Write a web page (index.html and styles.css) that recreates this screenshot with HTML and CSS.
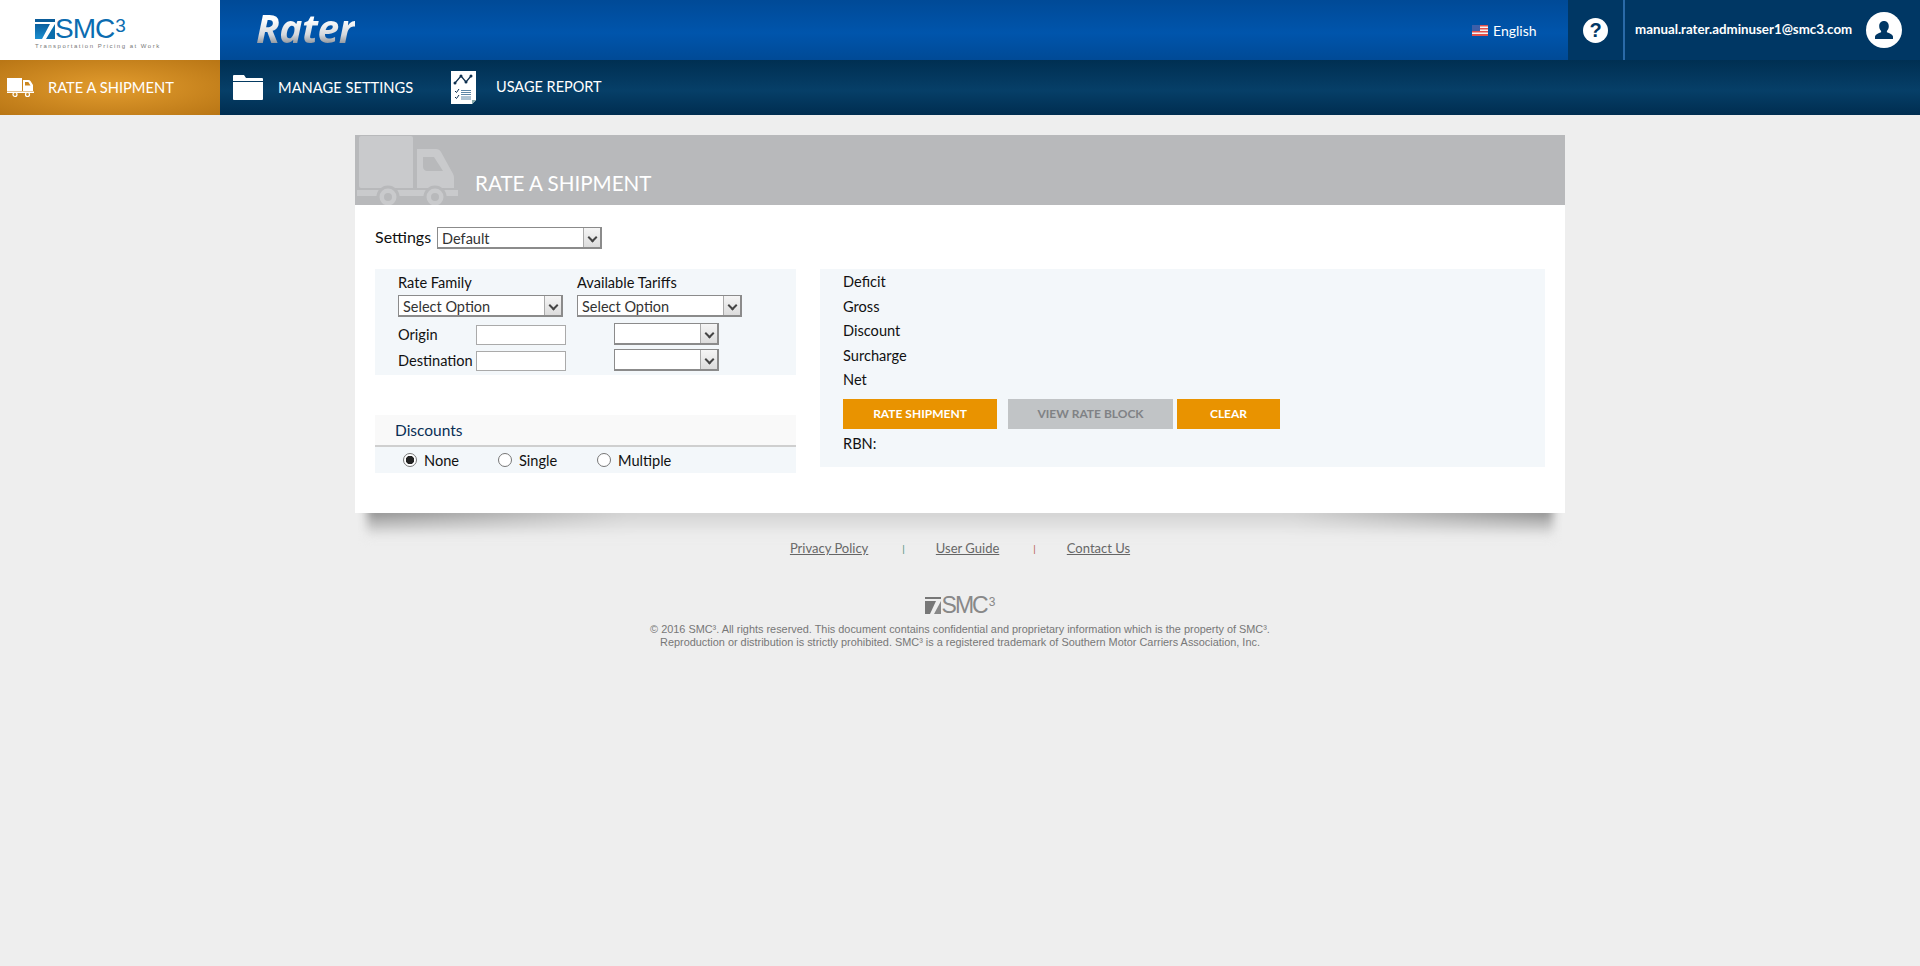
FILE: index.html
```html
<!DOCTYPE html>
<html lang="en">
<head>
    <meta charset="UTF-8">
    <title>SMC3 Rater</title>
    <link rel="stylesheet" href="styles.css">
</head>
<body>
    <header class="top-bar">
        <div class="brand">
            <div class="brand-mark">
                <svg class="brand-icon" width="20" height="20" viewBox="0 0 20 20">
                    <defs>
                        <linearGradient id="markBlue" x1="0" y1="0" x2="0" y2="1">
                            <stop offset="0" stop-color="#0a5f9e"/>
                            <stop offset="1" stop-color="#1b8fd0"/>
                        </linearGradient>
                    </defs>
                    <rect width="20" height="3" fill="#0a5c99"/>
                    <path d="M0 5h15L7 20H0z" fill="url(#markBlue)"/>
                    <path d="M20 5v15H11z" fill="#0a6cab"/>
                </svg>
                <span class="brand-name">SMC<sup>3</sup></span>
            </div>
            <div class="brand-tag">Transportation Pricing at Work</div>
        </div>
        <div class="app-name">Rater</div>
        <div class="lang">
            <svg width="16" height="11" viewBox="0 0 16 11">
                <rect width="16" height="11" fill="#f4f4f4"/>
                <path d="M0 0h16v1.500H0zM0 3h16v1.500H0zM0 6h16v1.500H0zM0 9h16v2H0z" fill="#e2504a"/>
                <rect width="8" height="6" fill="#3f5fa8"/>
            </svg>
            <span>English</span>
        </div>
        <div class="help">
            <span class="help-circle">?</span>
        </div>
        <div class="user">
            <span class="user-email">manual.rater.adminuser1@smc3.com</span>
            <span class="avatar">
                <svg width="20" height="20" viewBox="0 0 20 20">
                    <path d="M10 1c3 0 4.800 2.200 4.800 5.200 0 2-.8 3.600-1.900 4.700v1.300c2.800 1 5.600 2 6.100 4.300V19H1v-2.500c.5-2.300 3.300-3.300 6.100-4.300v-1.300C6 9.800 5.200 8.200 5.200 6.200 5.200 3.200 7 1 10 1z" fill="#003764"/>
                </svg>
            </span>
        </div>
    </header>

    <nav class="nav-bar">
        <a class="nav-item nav-active">
            <svg width="27" height="20" viewBox="0 0 27 20">
                <rect x="0" y="0" width="15" height="13" fill="#fff"/>
                <path d="M16 2h5.500c.8 0 1.500.4 2 1l2.500 4v6H16zM18 4v3.500h5.500L21.300 4z" fill="#fff" fill-rule="evenodd"/>
                <rect x="0" y="13.500" width="27" height="1.500" fill="#fff"/>
                <circle cx="8" cy="16.500" r="2" fill="#c98a24" stroke="#fff" stroke-width="1.200"/>
                <circle cx="20.500" cy="16.500" r="2" fill="#c98a24" stroke="#fff" stroke-width="1.200"/>
            </svg>
            <span>RATE A SHIPMENT</span>
        </a>
        <a class="nav-item nav-manage">
            <svg width="30" height="25" viewBox="0 0 30 25">
                <path d="M1 0h10l2 3h16a1 1 0 0 1 1 1v2H0V1a1 1 0 0 1 1-1z" fill="#fff"/>
                <path d="M0 7h30v17a1 1 0 0 1-1 1H1a1 1 0 0 1-1-1z" fill="#fff"/>
            </svg>
            <span>MANAGE SETTINGS</span>
        </a>
        <a class="nav-item nav-usage">
            <svg width="25" height="33" viewBox="0 0 25 33">
                <path d="M0 0h25v29l-4 4H0z" fill="#fff"/>
                <path d="M21 33v-4h4z" fill="#8aa"/>
                <path d="M4 12l6-7 5 6 5-6" fill="none" stroke="#0d2f4f" stroke-width="1.200"/>
                <circle cx="4" cy="12" r="1.500" fill="#0d2f4f"/>
                <circle cx="10" cy="5" r="1.500" fill="#0d2f4f"/>
                <circle cx="15" cy="11" r="1.500" fill="#0d2f4f"/>
                <circle cx="20" cy="5" r="1.500" fill="#0d2f4f"/>
                <path d="M4 20l1.500 1.500L8 18M4 26l1.500 1.500L8 24" fill="none" stroke="#0d2f4f"/>
                <path d="M10 19.500h10M10 21.500h10M10 23.500h10M10 26h10M10 28h10" stroke="#5d86a6"/>
            </svg>
            <span>USAGE REPORT</span>
        </a>
    </nav>

    <main class="card">
        <div class="card-head">
            <svg class="card-truck" width="103" height="70" viewBox="0 0 103 70">
                <path d="M6 1h50a2 2 0 0 1 2 2v50H6a2 2 0 0 1-2-2V3a2 2 0 0 1 2-2z" fill="#c9cacc"/>
                <path d="M62 14h19c2 0 4 1 5 3l11 20c1 2 2 3 2 6v10H62z" fill="#c9cacc"/>
                <path d="M68 22h11l9 14H72c-2 0-4-2-4-4z" fill="#b8b9bb"/>
                <rect x="2" y="55" width="101" height="6" fill="#c9cacc"/>
                <circle cx="33" cy="62" r="10" fill="#c9cacc" stroke="#b8b9bb" stroke-width="3"/>
                <circle cx="33" cy="62" r="4" fill="#b8b9bb"/>
                <circle cx="80" cy="62" r="10" fill="#c9cacc" stroke="#b8b9bb" stroke-width="3"/>
                <circle cx="80" cy="62" r="4" fill="#b8b9bb"/>
            </svg>
            <h1 class="card-title">RATE A SHIPMENT</h1>
        </div>

        <div class="card-body">
            <div class="settings-row">
                <label class="settings-label">Settings</label>
                <div class="select-box select-settings">
                    <select><option>Default</option></select>
                    <span class="select-arrow"></span>
                </div>
            </div>

            <div class="columns">
                <div class="left-col">
                    <section class="panel rate-panel">
                        <div class="rate-labels">
                            <label>Rate Family</label>
                            <label>Available Tariffs</label>
                        </div>
                        <div class="rate-selects">
                            <div class="select-box select-wide">
                                <select><option>Select Option</option></select>
                                <span class="select-arrow"></span>
                            </div>
                            <div class="select-box select-wide">
                                <select><option>Select Option</option></select>
                                <span class="select-arrow"></span>
                            </div>
                        </div>
                        <div class="lane-row">
                            <label class="lane-label">Origin</label>
                            <input class="lane-input" type="text">
                            <div class="select-box select-small">
                                <select><option></option></select>
                                <span class="select-arrow"></span>
                            </div>
                        </div>
                        <div class="lane-row">
                            <label class="lane-label">Destination</label>
                            <input class="lane-input" type="text">
                            <div class="select-box select-small">
                                <select><option></option></select>
                                <span class="select-arrow"></span>
                            </div>
                        </div>
                    </section>

                    <section class="discounts">
                        <div class="discounts-head">Discounts</div>
                        <div class="discounts-body">
                            <label class="radio-none"><input type="radio" name="disc" checked> None</label>
                            <label class="radio-single"><input type="radio" name="disc"> Single</label>
                            <label><input type="radio" name="disc"> Multiple</label>
                        </div>
                    </section>
                </div>

                <section class="panel result-panel">
                    <div class="result-line">Deficit</div>
                    <div class="result-line">Gross</div>
                    <div class="result-line">Discount</div>
                    <div class="result-line">Surcharge</div>
                    <div class="result-line">Net</div>
                    <div class="btn-row">
                        <button class="btn btn-rate">RATE SHIPMENT</button>
                        <button class="btn btn-view" disabled>VIEW RATE BLOCK</button>
                        <button class="btn btn-clear">CLEAR</button>
                    </div>
                    <div class="rbn">RBN:</div>
                </section>
            </div>
        </div>
    </main>
    <div class="card-shadow"></div>

    <footer class="footer">
        <div class="footer-links">
            <a>Privacy Policy</a>
            <span class="sep sep-green">|</span>
            <a>User Guide</a>
            <span class="sep sep-red">|</span>
            <a>Contact Us</a>
        </div>
        <div class="footer-logo">
            <svg width="16" height="17" viewBox="0 0 16 17">
                <rect width="16" height="2" fill="#777"/>
                <path d="M0 4h11L5 17H0z" fill="#777"/>
                <path d="M16 4v13H9z" fill="#888"/>
            </svg>
            <span>SMC<sup>3</sup></span>
        </div>
        <p class="legal">&copy; 2016 SMC&sup3;. All rights reserved. This document contains confidential and proprietary information which is the property of SMC&sup3;.<br>Reproduction or distribution is strictly prohibited. SMC&sup3; is a registered trademark of Southern Motor Carriers Association, Inc.</p>
    </footer>
</body>
</html>
```

FILE: styles.css
```css
* {
    box-sizing: border-box;
}

body {
    margin: 0;
    background: #eeeeee;
    font-family: Lato, "Open Sans", sans-serif;
    font-size: 14.600px;
    color: #111;
}

/* top bar */
.top-bar {
    display: flex;
    align-items: stretch;
    height: 60px;
    background: linear-gradient(#004a97, #0055ac 55%, #004a96);
}

.brand {
    width: 220px;
    background: #fff;
    padding: 19px 0 0 35px;
}

.brand-mark {
    display: flex;
    align-items: center;
    height: 20px;
}

.brand-name {
    font-family: "Liberation Sans", sans-serif;
    font-size: 28px;
    letter-spacing: -1px;
    color: #0b6cb0;
}

.brand-name sup {
    font-size: 19px;
    vertical-align: 6px;
    line-height: 0;
    letter-spacing: 0;
    margin-left: 1px;
}

.brand-tag {
    font-family: "Liberation Sans", sans-serif;
    font-size: 6px;
    letter-spacing: 1.500px;
    color: #777;
    margin-top: 4px;
    white-space: nowrap;
}

.app-name {
    font-family: "Open Sans", sans-serif;
    font-style: italic;
    font-weight: 700;
    font-size: 39px;
    line-height: 56px;
    letter-spacing: -0.500px;
    margin-left: 36px;
    height: 56px;
    background: linear-gradient(#fff 35%, #d5d8dc 62%, #8f959c 78%);
    -webkit-background-clip: text;
    background-clip: text;
    color: transparent;
}

.lang {
    margin-left: auto;
    display: flex;
    align-items: center;
    gap: 5px;
    width: 96px;
    color: #fff;
    font-size: 14px;
}

.help {
    width: 55px;
    background: #003764;
    display: flex;
    align-items: center;
    justify-content: center;
}

.help-circle {
    width: 25px;
    height: 25px;
    border-radius: 50%;
    background: #fff;
    color: #003764;
    font-family: "Liberation Sans", sans-serif;
    font-size: 20px;
    font-weight: 700;
    line-height: 25px;
    text-align: center;
}

.user {
    width: 297px;
    background: #003764;
    border-left: 2px solid #2a6aa8;
    display: flex;
    align-items: center;
    padding-left: 10px;
    color: #fff;
}

.user-email {
    font-size: 13.300px;
    font-weight: 700;
    width: 231px;
    margin-top: -3px;
    white-space: nowrap;
}

.avatar {
    width: 36px;
    height: 36px;
    border-radius: 50%;
    background: #fff;
    display: flex;
    align-items: center;
    justify-content: center;
}

/* nav */
.nav-bar {
    display: flex;
    height: 55px;
    background: linear-gradient(#002f52, #063f68 55%, #002d50);
}

.nav-item {
    display: flex;
    align-items: center;
    color: #fff;
    font-size: 14.700px;
}

.nav-item span {
    margin-top: -2px;
}

.nav-active {
    width: 220px;
    padding-left: 7px;
    gap: 14px;
    background: radial-gradient(ellipse 70% 70% at center, #e29c2e, #b97615);
}

.nav-manage {
    margin-left: 13px;
    gap: 15px;
    width: 218px;
}

.nav-usage {
    gap: 20px;
    font-size: 14.500px;
}

/* card */
.card {
    position: relative;
    z-index: 1;
    width: 1210px;
    height: 378px;
    margin: 20px auto 0;
    background: #fff;
}

.card-head {
    height: 70px;
    background: #b8b9bb;
    display: flex;
    align-items: flex-end;
}

.card-truck {
    display: block;
}

.card-title {
    margin: 0 0 10px 17px;
    font-size: 20.600px;
    font-weight: 400;
    color: #fff;
}

.card-body {
    padding: 22px 20px 0;
}

.settings-row {
    display: flex;
    align-items: center;
    gap: 6px;
    height: 22px;
    font-size: 16px;
}

.settings-label {
    margin-top: -4px;
}

.select-box {
    display: flex;
    height: 22px;
    border: 2px solid #8b8b8b;
    border-top-width: 1px;
    border-left-width: 1px;
    background: #fff;
}

.select-box select {
    flex: 1;
    min-width: 0;
    border: 0;
    padding: 2px 4px 0;
    background: transparent;
    appearance: none;
    font-family: inherit;
    font-size: 14.500px;
    color: #333;
}

.select-arrow {
    width: 17px;
    background: linear-gradient(#f5f5f5, #dcdcdc);
    border-left: 1px solid #aaa;
    position: relative;
}

.select-arrow::after {
    content: "";
    position: absolute;
    left: 5px;
    top: 6px;
    width: 5px;
    height: 5px;
    border-right: 2px solid #444;
    border-bottom: 2px solid #444;
    transform: rotate(45deg);
}

.select-settings {
    width: 165px;
}

.columns {
    display: flex;
    gap: 24px;
    margin-top: 20px;
}

.left-col {
    width: 421px;
}

.panel {
    background: #f3f7fa;
}

.rate-panel {
    height: 106px;
    padding: 1px 0 0 23px;
}

.rate-labels {
    display: flex;
    height: 25px;
    align-items: center;
    padding-bottom: 1px;
}

.rate-labels label {
    width: 179px;
}

.rate-selects {
    display: flex;
    gap: 14px;
}

.select-wide {
    width: 165px;
}

.lane-row {
    display: flex;
    align-items: center;
    height: 26px;
}

.lane-row:nth-child(3) {
    margin-top: 4px;
}

.lane-label {
    width: 78px;
    margin-top: 1px;
}

.lane-input {
    width: 90px;
    height: 20px;
    margin-top: 1px;
    border: 1px solid #aaa;
    background: #fff;
}

.select-small {
    width: 105px;
    margin-left: 48px;
}

.discounts {
    margin-top: 40px;
}

.discounts-head {
    height: 32px;
    background: #f9f9f9;
    border-bottom: 2px solid #cfcfcf;
    padding-left: 20px;
    line-height: 30px;
    font-size: 15.500px;
    color: #0a2f55;
}

.discounts-body {
    height: 26px;
    background: #f3f7fa;
    padding-left: 28px;
    display: flex;
    align-items: center;
}

.discounts-body label {
    display: flex;
    align-items: center;
    gap: 7px;
}

.discounts-body input {
    appearance: none;
    margin: 0;
    width: 14px;
    height: 14px;
    border: 1px solid #767676;
    border-radius: 50%;
    background: #fff;
}

.discounts-body input:checked {
    background: radial-gradient(circle, #222 0, #222 4px, #fff 4.500px);
}

.radio-none {
    width: 95px;
}

.radio-single {
    width: 99px;
}

.result-panel {
    width: 725px;
    height: 198px;
    padding: 1px 0 0 23px;
}

.result-line {
    height: 24.500px;
    line-height: 24px;
}

.btn-row {
    display: flex;
    margin-top: 6px;
}

.btn {
    height: 30px;
    border: 0;
    font-family: inherit;
    font-size: 12px;
    font-weight: 700;
    color: #fff;
    background: #e99300;
}

.btn-rate {
    width: 154px;
    margin-right: 11px;
}

.btn-view {
    width: 165px;
    margin-right: 4px;
    background: #c1c4c6;
    color: #808285;
}

.btn-clear {
    width: 103px;
}

.rbn {
    margin-top: 6px;
}

/* the curled shadow under the card */
.card-shadow {
    width: 1186px;
    height: 32px;
    margin: -8px auto 0;
    background:
        linear-gradient(90deg, rgba(238, 238, 238, 0) 0, rgba(238, 238, 238, 0.7) 22%, rgba(238, 238, 238, 0.7) 78%, rgba(238, 238, 238, 0) 100%),
        linear-gradient(#777777, #eeeeee);
    filter: blur(5px);
}

/* footer */
.footer {
    text-align: center;
    color: #777;
}

.footer-links {
    display: flex;
    justify-content: center;
    align-items: center;
    margin-top: -1px;
    height: 24px;
    font-size: 13px;
}

.footer-links a {
    text-decoration: underline;
    color: #666;
}

.sep {
    font-size: 10px;
    margin: 0 31px 0 34px;
}

.sep-green {
    color: #3a8a6a;
}

.sep-red {
    color: #b5533c;
}

.footer-logo {
    display: flex;
    justify-content: center;
    align-items: center;
    gap: 1px;
    margin-top: 35px;
    height: 20px;
    font-family: "Liberation Sans", sans-serif;
    font-size: 23px;
    letter-spacing: -2px;
    color: #888;
}

.footer-logo sup {
    font-size: 12px;
    line-height: 0;
    vertical-align: 7px;
    letter-spacing: 0;
    margin-left: 2px;
}

.legal {
    margin: 8px 0 0;
    font-family: "Liberation Sans", sans-serif;
    font-size: 10.900px;
    line-height: 13px;
    color: #777;
}
```
